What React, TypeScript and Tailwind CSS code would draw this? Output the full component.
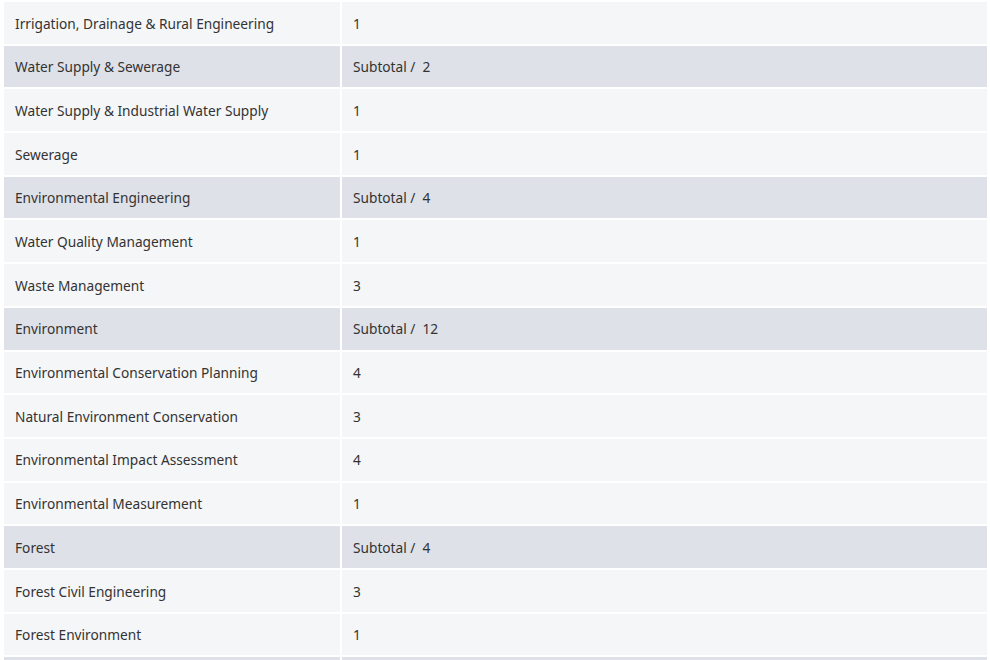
const rows: { name: string; value: string; subtotal?: boolean }[] = [
  { name: "Irrigation, Drainage & Rural Engineering", value: "1" },
  { name: "Water Supply & Sewerage", value: "Subtotal /  2", subtotal: true },
  { name: "Water Supply & Industrial Water Supply", value: "1" },
  { name: "Sewerage", value: "1" },
  { name: "Environmental Engineering", value: "Subtotal /  4", subtotal: true },
  { name: "Water Quality Management", value: "1" },
  { name: "Waste Management", value: "3" },
  { name: "Environment", value: "Subtotal /  12", subtotal: true },
  { name: "Environmental Conservation Planning", value: "4" },
  { name: "Natural Environment Conservation", value: "3" },
  { name: "Environmental Impact Assessment", value: "4" },
  { name: "Environmental Measurement", value: "1" },
  { name: "Forest", value: "Subtotal /  4", subtotal: true },
  { name: "Forest Civil Engineering", value: "3" },
  { name: "Forest Environment", value: "1" },
  // next row only peeks in at the bottom edge
  { name: "", value: "", subtotal: true },
];

export default function App() {
  return (
    <div className="h-[660px] overflow-hidden bg-white">
      <div
        className="flex flex-col gap-[2px] pl-[4px] pr-[3px] pt-[2px] text-[13.7px] text-[#333]"
        style={{ fontFamily: '"Noto Sans", "Open Sans", sans-serif' }}
      >
        {rows.map((r, i) => (
          <div key={i} className="flex h-[41.7px] gap-[2px]">
            <div
              className={
                "flex w-[336px] shrink-0 items-center px-[11px] pt-[2px] " +
                (r.subtotal ? "bg-[#dfe1e8]" : "bg-[#f5f6f8]")
              }
            >
              {r.name}
            </div>
            <div
              className={
                "flex flex-1 items-center whitespace-pre px-[11px] pt-[2px] " +
                (r.subtotal ? "bg-[#dfe1e8]" : "bg-[#f5f6f8]")
              }
            >
              {r.value}
            </div>
          </div>
        ))}
      </div>
    </div>
  );
}
